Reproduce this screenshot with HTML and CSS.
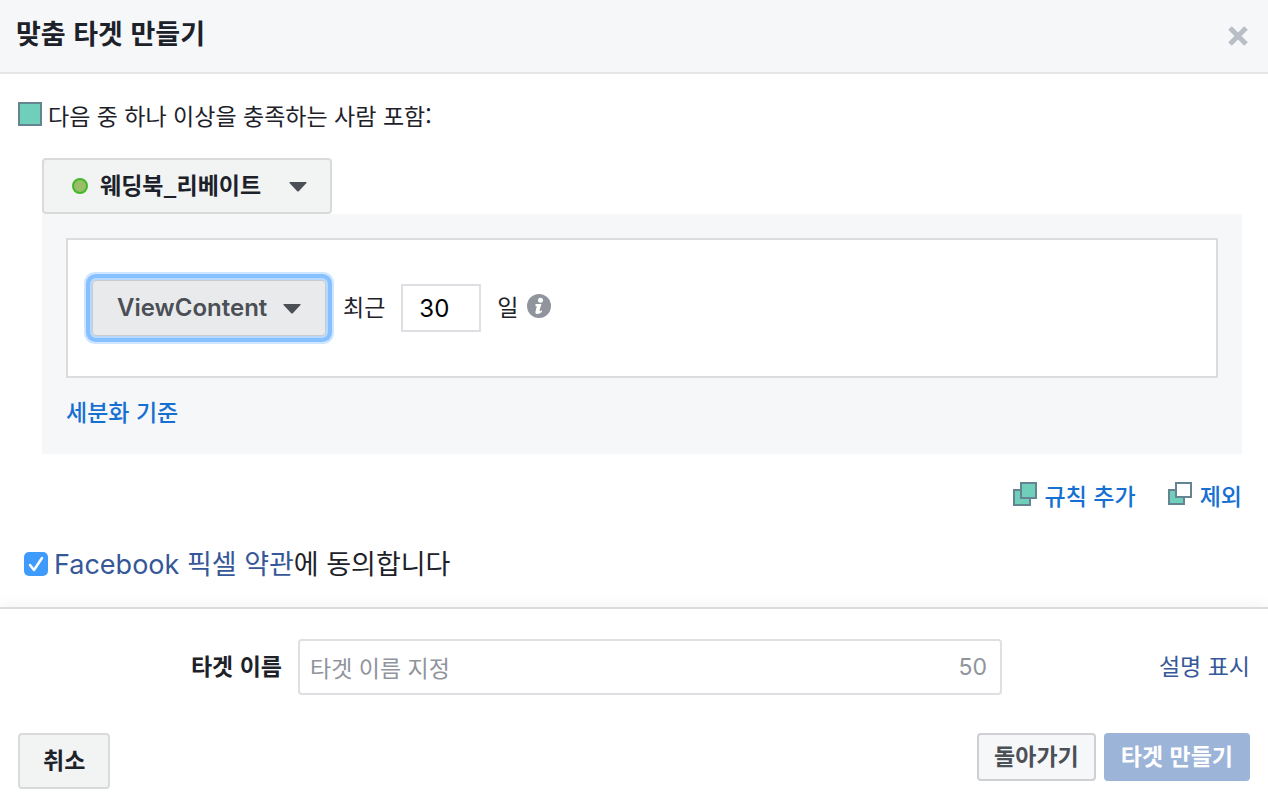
FILE: index.html
```html
<!DOCTYPE html>
<html lang="ko">
<head>
    <meta charset="UTF-8">
    <meta name="viewport" content="width=device-width, initial-scale=1.0">
    <title>맞춤 타겟 만들기</title>
    <link rel="stylesheet" href="styles.css">
</head>
<body>
    <div class="header">
        <h1>맞춤 타겟 만들기</h1>
        <button type="button" class="close-button" aria-label="닫기">
            <svg width="20" height="20" viewBox="0 0 20 20"><path d="M2 2L18 18M18 2L2 18" stroke="#b9bdc6" stroke-width="5"/></svg>
        </button>
    </div>

    <div class="content">
        <div class="rule-title">
            <span class="include-icon"></span>
            <span>다음 중 하나 이상을 충족하는 사람 포함:</span>
        </div>

        <div class="rule-group">
            <div class="dropdown source">
                <span class="status-dot"></span>
                <select aria-label="픽셀">
                    <option>웨딩북_리베이트</option>
                </select>
                <svg class="caret" width="18" height="10" viewBox="0 0 18 10"><path d="M1 0H17Q18 0 17.500 1L10 9Q9 10 8 9L.5 1Q0 0 1 0Z" fill="#4b4f56"/></svg>
            </div>
            <div class="rule-panel">
                <div class="rule-box">
                    <div class="dropdown event">
                        <select aria-label="이벤트">
                            <option>ViewContent</option>
                        </select>
                        <svg class="caret" width="18" height="10" viewBox="0 0 18 10"><path d="M1 0H17Q18 0 17.500 1L10 9Q9 10 8 9L.5 1Q0 0 1 0Z" fill="#4b4f56"/></svg>
                    </div>
                    <label for="days">최근</label>
                    <input type="text" id="days" class="days" value="30">
                    <span class="unit">일</span>
                    <svg class="info" width="24" height="24" viewBox="0 0 24 24">
                        <circle cx="12" cy="12" r="12" fill="#90949c"/>
                        <circle cx="13.500" cy="6.300" r="2.500" fill="#fff"/>
                        <path d="M8.500 10H14.500L12.600 16.300Q12.400 17.300 13.200 17L14.800 16.300V18Q12.500 20 10.500 20Q7.900 20 8.500 17.500L9.800 12.200H8.500Z" fill="#fff"/>
                    </svg>
                </div>
                <a href="#">세분화 기준</a>
            </div>
        </div>

        <div class="rule-links">
            <a href="#">
                <svg width="24" height="24" viewBox="0 0 24 24" fill="#6fcfbb" stroke="#648491" stroke-width="2"><path d="M1 8H17V23H1Z"/><path d="M8 1H23V16H8Z"/></svg>
                규칙 추가
            </a>
            <a href="#">
                <svg width="24" height="24" viewBox="0 0 24 24" fill="#6fcfbb" stroke="#648491" stroke-width="2"><path d="M1 8H16V22H1Z"/><path d="M8 1H23V15H8Z" fill="#fff"/></svg>
                제외
            </a>
        </div>

        <div class="terms">
            <span class="check">
                <input type="checkbox" id="agree" checked>
                <svg width="24" height="24" viewBox="0 0 24 24"><path d="M6 13L10 18L18 6" fill="none" stroke="#fff" stroke-width="2.500" stroke-linecap="round" stroke-linejoin="round"/></svg>
            </span>
            <label for="agree"><a href="#"><span class="latin">Facebook</span> 픽셀 약관</a>에 동의합니다</label>
        </div>
    </div>

    <div class="footer">
        <div class="name-row">
            <label for="name">타겟 이름</label>
            <div class="name-field">
                <input type="text" id="name" placeholder="타겟 이름 지정" maxlength="50">
                <span class="count">50</span>
            </div>
            <a href="#">설명 표시</a>
        </div>
        <div class="actions">
            <button type="button" class="cancel">취소</button>
            <button type="button" class="back">돌아가기</button>
            <button type="submit" class="create">타겟 만들기</button>
        </div>
    </div>
</body>
</html>
```
FILE: styles.css
```css
* {
    box-sizing: border-box;
}
body {
    font-family: "Noto Sans CJK KR", sans-serif;
    font-size: 23px;
    line-height: 32px;
    margin: 0;
    color: #1d2129;
    background-color: white;
}
a {
    color: #1670d2;
    text-decoration: none;
}
svg {
    display: block;
}
input, select, button {
    font: inherit;
    margin: 0;
}
.header {
    display: flex;
    justify-content: space-between;
    align-items: center;
    height: 74px;
    padding: 0 20px 6px 16px;
    background-color: #f6f7f9;
    border-bottom: 2px solid #e5e5e5;
}
.header h1 {
    margin: 0;
    font-size: 27px;
    font-weight: bold;
}
.close-button {
    padding: 6px 0 0;
    border: none;
    background: none;
}
.content {
    padding: 24px 26px 26px 18px;
}
.rule-title {
    display: flex;
    align-items: center;
    gap: 6px;
    height: 34px;
}
.include-icon {
    width: 24px;
    height: 24px;
    margin-bottom: 2px;
    background-color: #6fcfbb;
    border: 2px solid #648491;
}
.rule-group {
    margin: 26px 0 0 24px;
}
.dropdown {
    position: relative;
}
.dropdown select {
    display: block;
    width: 100%;
    height: 56px;
    appearance: none;
    font-weight: bold;
    border-radius: 4px;
    outline: none;
}
.caret {
    position: absolute;
    top: 24px;
    right: 25px;
    pointer-events: none;
}
.source {
    width: 290px;
}
.source select {
    padding: 0 56px 4px 56px;
    color: #1d2129;
    background-color: #f2f4f4;
    border: 2px solid #d9dbdb;
}
.status-dot {
    position: absolute;
    top: 20px;
    left: 30px;
    width: 16px;
    height: 16px;
    background-color: #9abe67;
    border: 2px solid #42b72a;
    border-radius: 50%;
}
.rule-panel {
    height: 240px;
    padding: 24px;
    background-color: #f6f7f9;
}
.rule-panel a, .rule-links a {
    font-weight: 500;
}
.rule-box {
    display: flex;
    align-items: center;
    height: 140px;
    margin-bottom: 17px;
    padding: 0 24px;
    background-color: white;
    border: 2px solid #dadcde;
}
.rule-box label, .unit, .info {
    margin-bottom: 4px;
}
.event {
    width: 234px;
    margin-right: 17px;
}
.event select {
    padding: 0 24px;
    font-family: Inter, sans-serif;
    font-size: 24px;
    font-weight: 600;
    color: #4b4f56;
    background-color: #e9eaeb;
    border: 1px solid #c8ccd0;
    box-shadow: 0 0 0 2px #b8d9fc, 0 0 0 6px #87c0fe, 0 0 0 8px #cfe6ff;
}
.days {
    width: 80px;
    height: 48px;
    margin: 0 16px;
    padding: 0 16px;
    font-family: Inter, sans-serif;
    font-size: 24px;
    border: 2px solid #dddfe2;
}
.info {
    margin-left: 8px;
}
.rule-links {
    display: flex;
    justify-content: flex-end;
    gap: 32px;
    margin-top: 25px;
}
.rule-links a {
    display: flex;
    gap: 8px;
}
.rule-links svg {
    margin-top: 3px;
}
.terms {
    display: flex;
    align-items: center;
    gap: 6px;
    margin: 36px 0 0 6px;
    font-size: 27px;
}
.terms a, .name-row a {
    color: #365899;
}
.latin {
    font-family: Inter, sans-serif;
}
.check {
    position: relative;
}
.check input {
    display: block;
    width: 24px;
    height: 24px;
    appearance: none;
    background-color: #3f9bfb;
    border-radius: 5px;
}
.check svg {
    position: absolute;
    top: 0;
    left: 0;
    pointer-events: none;
}
.footer {
    padding: 30px 18px 14px;
    border-top: 2px solid #dcdcdc;
    box-shadow: 0 -2px 14px rgba(0, 0, 0, 0.05);
}
.name-row {
    display: grid;
    grid-template-columns: 264px 1fr 232px;
    align-items: center;
    column-gap: 16px;
}
.name-row label, .name-row a {
    margin-bottom: 4px;
    text-align: right;
}
.name-row label {
    font-weight: bold;
}
.name-field {
    position: relative;
}
.name-field input {
    display: block;
    width: 100%;
    height: 56px;
    padding: 0 60px 0 10px;
    border: 2px solid #dddfe2;
    border-radius: 4px;
}
.name-field input::placeholder {
    color: #90949c;
}
.count {
    position: absolute;
    top: 12px;
    right: 15px;
    font-family: Inter, sans-serif;
    color: #90949c;
}
.actions {
    display: flex;
    align-items: flex-start;
    gap: 8px;
    margin-top: 38px;
}
.actions button {
    height: 48px;
    padding: 0 15px 4px;
    font-weight: bold;
    border: 2px solid #ced0d4;
    border-radius: 4px;
}
.actions .cancel {
    height: 56px;
    margin-right: auto;
    padding: 0 23px 4px;
    color: #1d2129;
    background-color: #f2f4f4;
    border-color: #d9dbdb;
}
.actions .back {
    color: #4b4f56;
    background-color: #f6f7f9;
}
.actions .create {
    color: white;
    background-color: #9cb4d8;
    border-color: #9cb4d8;
}
```
